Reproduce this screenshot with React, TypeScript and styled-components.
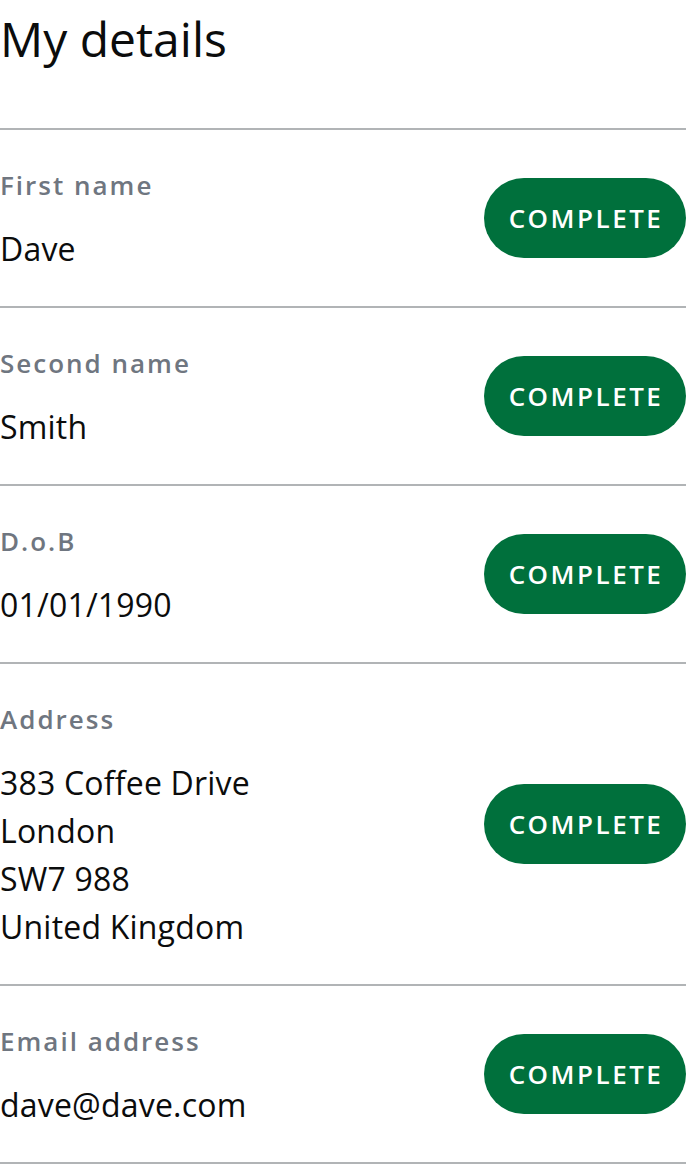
import React from "react";
import styled, { createGlobalStyle } from "styled-components";

const Global = createGlobalStyle`
  html, body { margin: 0; padding: 0; background: #ffffff; }
  body { font-family: "Open Sans", "Noto Sans", sans-serif; color: #0b0c0c; }
`;

const Page = styled.main`
  width: 686px;
  display: flex;
  flex-direction: column;
`;

const Title = styled.h1`
  margin: 0;
  padding: 3px 0 53px;
  font-size: 48px;
  line-height: 72px;
  font-weight: 400;
  color: #0b0c0c;
`;

const List = styled.dl`
  margin: 0;
  display: flex;
  flex-direction: column;
  border-bottom: 2px solid #b1b4b6;
`;

const Row = styled.div`
  display: flex;
  align-items: center;
  justify-content: space-between;
  border-top: 2px solid #b1b4b6;
  padding: 36px 0 33px;
`;

const Info = styled.div`
  display: flex;
  flex-direction: column;
  gap: 20px;
`;

const Label = styled.dt`
  margin: 0;
  font-size: 26px;
  line-height: 39px;
  font-weight: 600;
  letter-spacing: 2px;
  color: #6f7680;
`;

const Value = styled.dd`
  margin: 0;
  font-size: 32px;
  line-height: 48px;
  letter-spacing: 0.2px;
  color: #0b0c0c;
`;

const Line = styled.span`
  display: block;
`;

const Status = styled.span`
  width: 202px;
  height: 80px;
  margin-bottom: 3px;
  border-radius: 40px;
  background: #00703c;
  color: #ffffff;
  display: flex;
  align-items: center;
  justify-content: center;
  padding-left: 2px;
  box-sizing: border-box;
  font-size: 26px;
  font-weight: 600;
  letter-spacing: 2.5px;
  flex-shrink: 0;
`;

const rows: { label: string; value: string[] }[] = [
  { label: "First name", value: ["Dave"] },
  { label: "Second name", value: ["Smith"] },
  { label: "D.o.B", value: ["01/01/1990"] },
  {
    label: "Address",
    value: ["383 Coffee Drive", "London", "SW7 988", "United Kingdom"],
  },
  { label: "Email address", value: ["dave@dave.com"] },
];

export default function App() {
  return (
    <Page>
      <Global />
      <Title>My details</Title>
      <List>
        {rows.map((r) => (
          <Row key={r.label}>
            <Info>
              <Label>{r.label}</Label>
              <Value>
                {r.value.map((l) => (
                  <Line key={l}>{l}</Line>
                ))}
              </Value>
            </Info>
            <Status>COMPLETE</Status>
          </Row>
        ))}
      </List>
    </Page>
  );
}
